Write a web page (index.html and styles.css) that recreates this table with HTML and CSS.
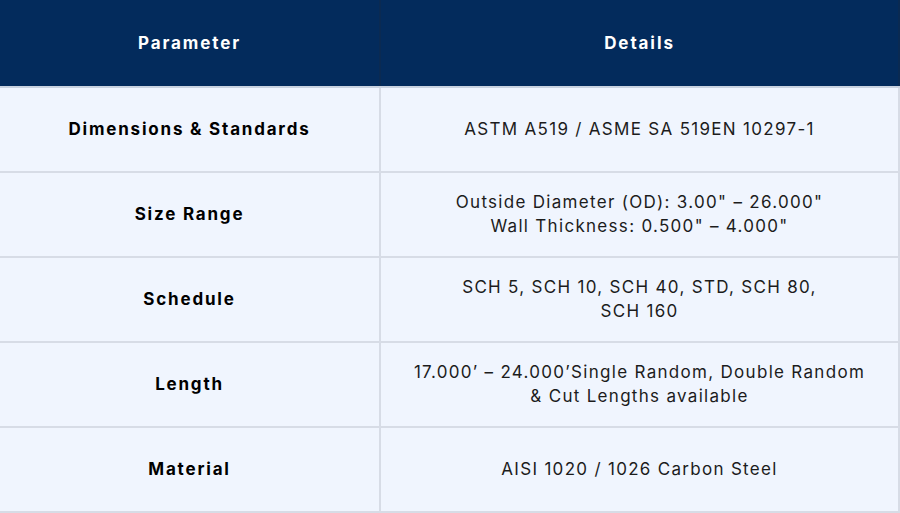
FILE: index.html
```html
<!DOCTYPE html>
<html lang="en">
<head>
<meta charset="utf-8">
<link rel="stylesheet" href="styles.css">
</head>
<body>
<table class="spec">
  <thead>
    <tr><th class="col-param">Parameter</th><th>Details</th></tr>
  </thead>
  <tbody>
    <tr><td class="param">Dimensions &amp; Standards</td><td>ASTM A519 / ASME SA 519EN 10297-1</td></tr>
    <tr><td class="param">Size Range</td><td>Outside Diameter (OD): 3.00" – 26.000"<br>Wall Thickness: 0.500" – 4.000"</td></tr>
    <tr><td class="param">Schedule</td><td>SCH 5, SCH 10, SCH 40, STD, SCH 80,<br>SCH 160</td></tr>
    <tr><td class="param">Length</td><td>17.000’ – 24.000’Single Random, Double Random<br>&amp; Cut Lengths available</td></tr>
    <tr><td class="param">Material</td><td>AISI 1020 / 1026 Carbon Steel</td></tr>
  </tbody>
</table>
</body>
</html>
```
FILE: styles.css
```css
html, body {
  margin: 0;
  padding: 0;
  background: #f0f5fe;
}
.spec {
  width: 900px;
  border-collapse: collapse;
  table-layout: fixed;
  font-family: Inter, "Liberation Sans", sans-serif;
  font-size: 17px;
  line-height: 24px;
  color: #1c1c1c;
}
.spec th, .spec td {
  text-align: center;
  vertical-align: middle;
  border: 2px solid #d7dce6;
  padding: 0 8px;
}
.spec th {
  background: #032b5c;
  color: #fff;
  font-weight: 700;
  height: 82px;
  padding-bottom: 2px;
  letter-spacing: 1.9px;
  border-color: #032b5c #0a2a52 #c9d2e0 #0a2a52;
}
.spec th.col-param {
  width: 363px;
  border-left: 0;
}
.spec td {
  background: #f0f5fe;
  height: 81px;
  padding-bottom: 2px;
  letter-spacing: 1.3px;
}
.spec td:first-child { border-left: 0; }
.spec td.param {
  font-weight: 700;
  color: #000;
  letter-spacing: 1.8px;
}
```
